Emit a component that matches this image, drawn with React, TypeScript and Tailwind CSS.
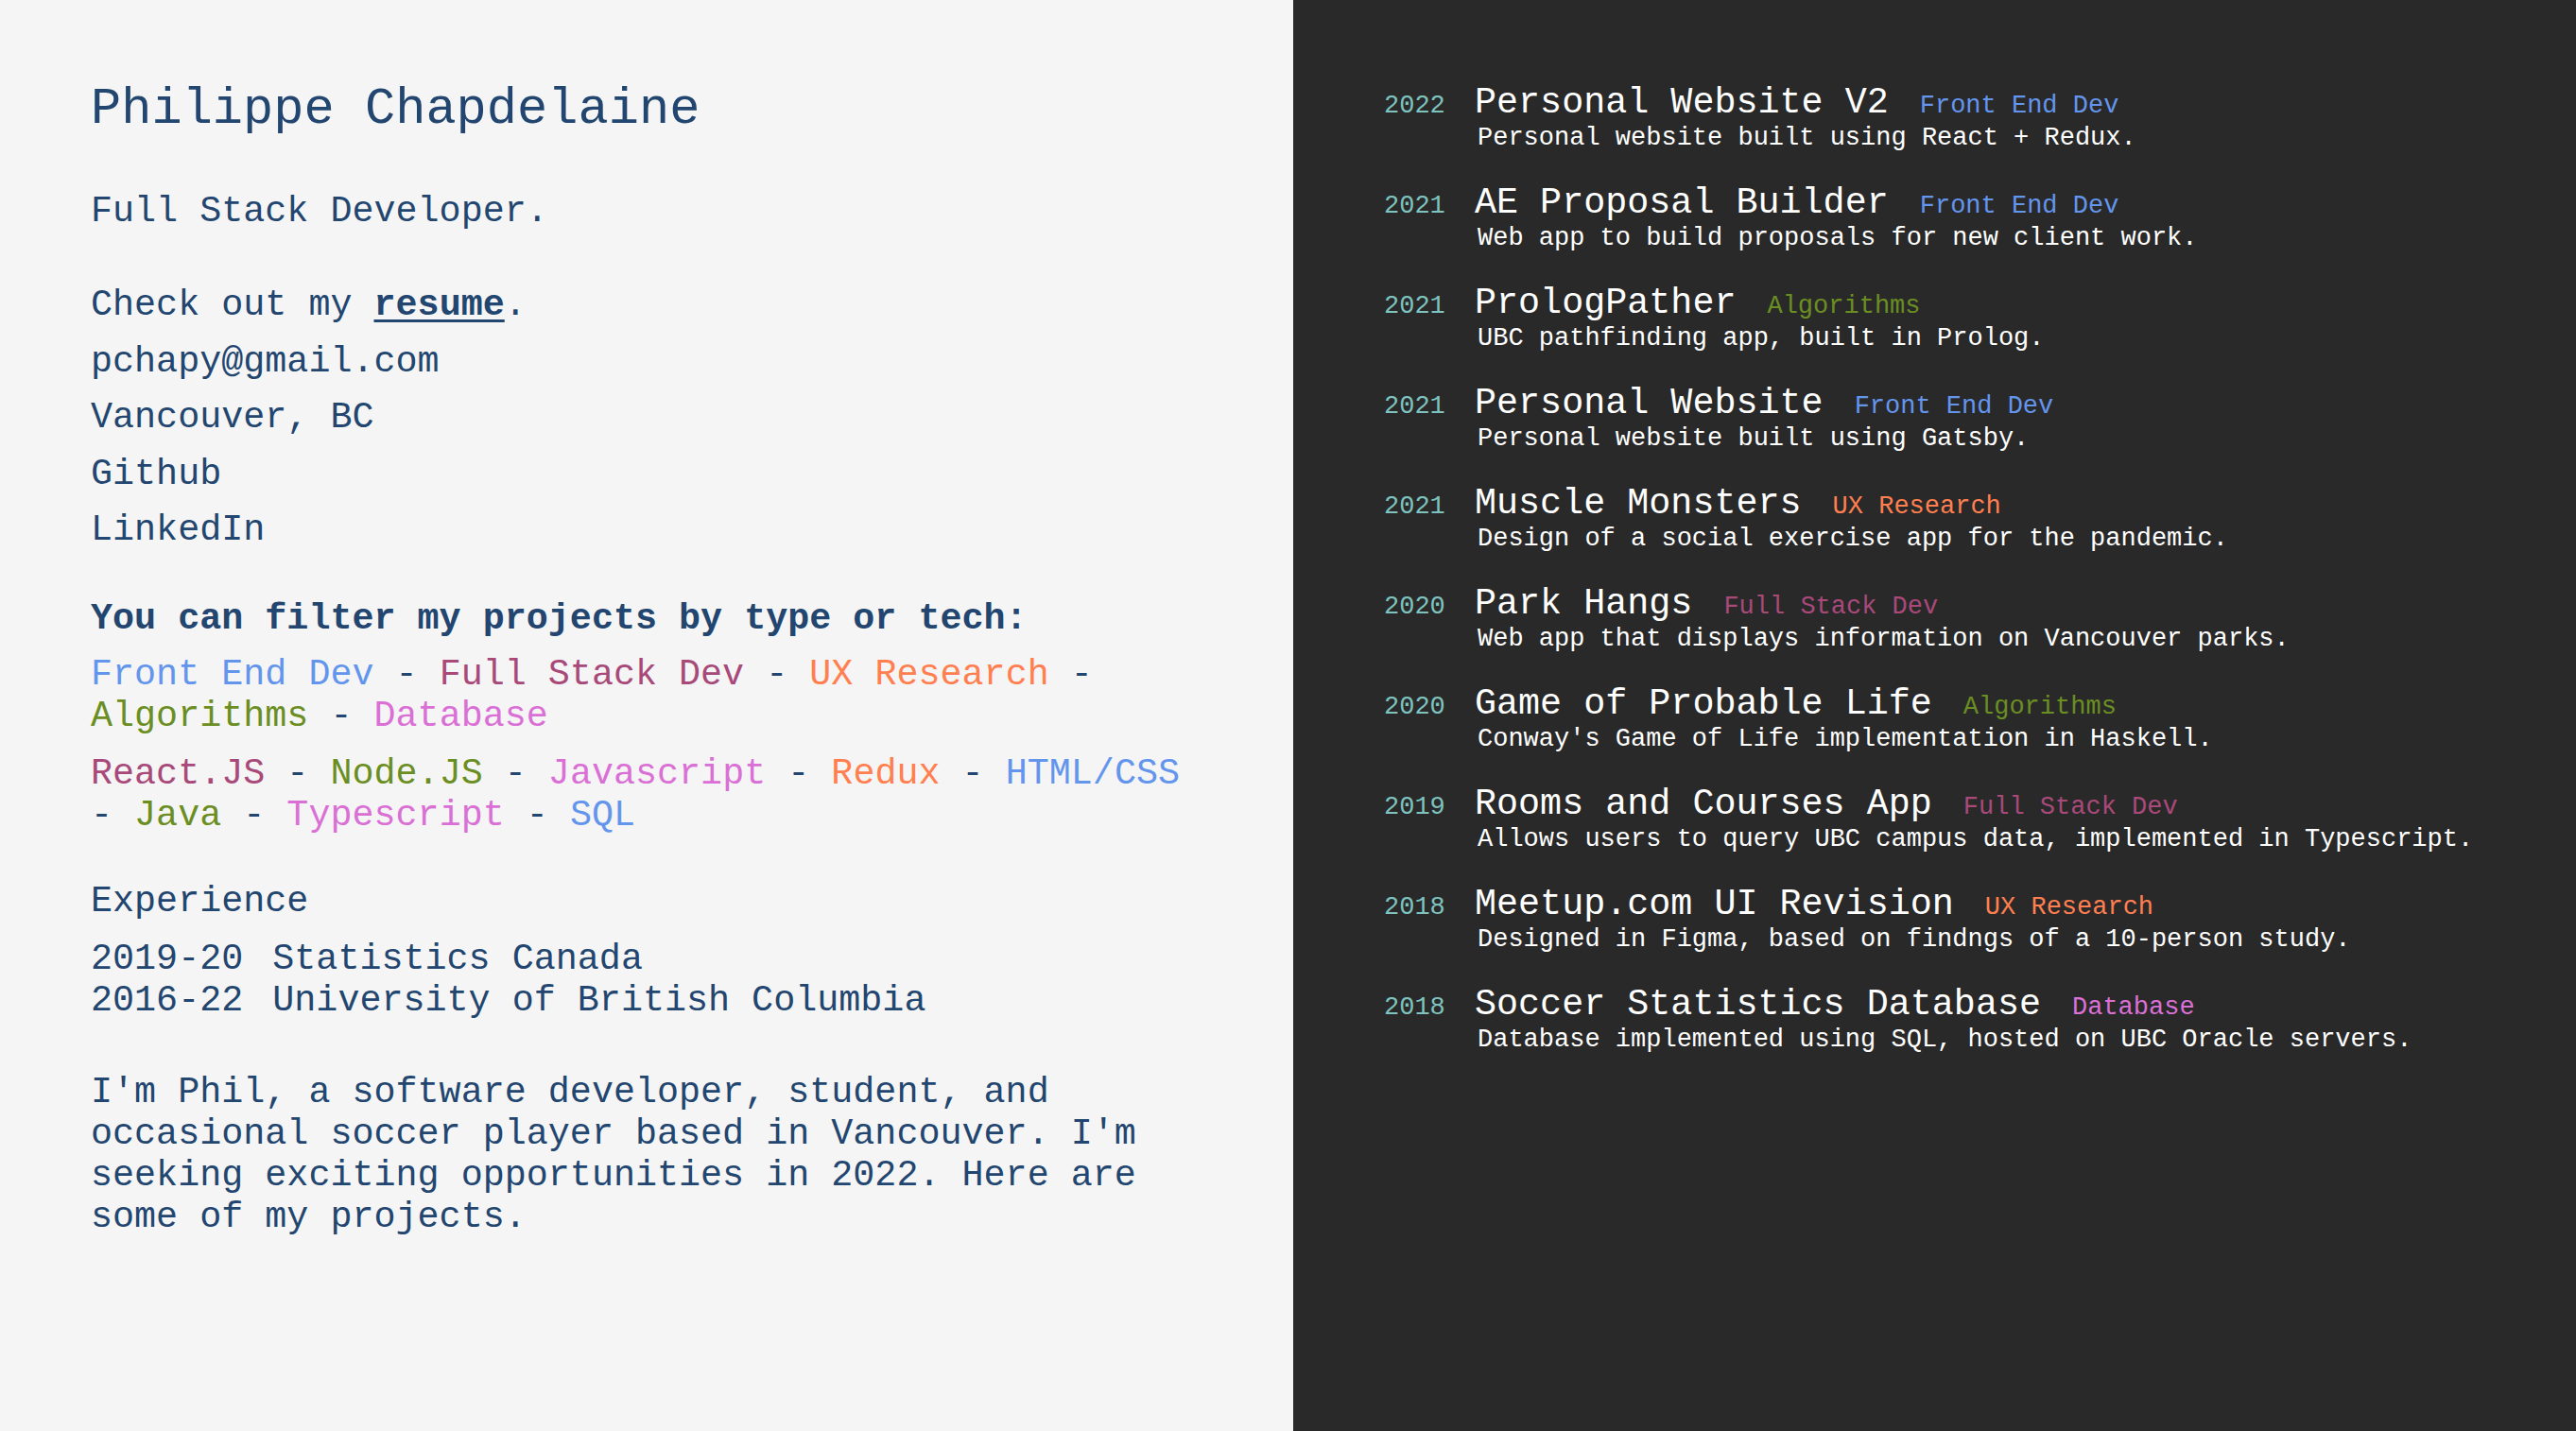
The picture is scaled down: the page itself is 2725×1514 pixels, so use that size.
import React from 'react';

const COLORS: Record<string, string> = {
  'Front End Dev': 'text-[#6495ed]',
  'Full Stack Dev': 'text-[#a8497a]',
  'UX Research': 'text-[#ff7f50]',
  Algorithms: 'text-[#6b8e23]',
  Database: 'text-[#da70d6]',
};

const types = [
  { name: 'Front End Dev', color: 'text-[#6495ed]' },
  { name: 'Full Stack Dev', color: 'text-[#a8497a]' },
  { name: 'UX Research', color: 'text-[#ff7f50]' },
  { name: 'Algorithms', color: 'text-[#6b8e23]' },
  { name: 'Database', color: 'text-[#da70d6]' },
];

const techs = [
  { name: 'React.JS', color: 'text-[#a8497a]' },
  { name: 'Node.JS', color: 'text-[#6b8e23]' },
  { name: 'Javascript', color: 'text-[#da70d6]' },
  { name: 'Redux', color: 'text-[#ff7f50]' },
  { name: 'HTML/CSS', color: 'text-[#6495ed]' },
  { name: 'Java', color: 'text-[#6b8e23]' },
  { name: 'Typescript', color: 'text-[#da70d6]' },
  { name: 'SQL', color: 'text-[#6495ed]' },
];

const projects = [
  { year: '2022', title: 'Personal Website V2', tag: 'Front End Dev', desc: 'Personal website built using React + Redux.' },
  { year: '2021', title: 'AE Proposal Builder', tag: 'Front End Dev', desc: 'Web app to build proposals for new client work.' },
  { year: '2021', title: 'PrologPather', tag: 'Algorithms', desc: 'UBC pathfinding app, built in Prolog.' },
  { year: '2021', title: 'Personal Website', tag: 'Front End Dev', desc: 'Personal website built using Gatsby.' },
  { year: '2021', title: 'Muscle Monsters', tag: 'UX Research', desc: 'Design of a social exercise app for the pandemic.' },
  { year: '2020', title: 'Park Hangs', tag: 'Full Stack Dev', desc: 'Web app that displays information on Vancouver parks.' },
  { year: '2020', title: 'Game of Probable Life', tag: 'Algorithms', desc: "Conway's Game of Life implementation in Haskell." },
  { year: '2019', title: 'Rooms and Courses App', tag: 'Full Stack Dev', desc: 'Allows users to query UBC campus data, implemented in Typescript.' },
  { year: '2018', title: 'Meetup.com UI Revision', tag: 'UX Research', desc: 'Designed in Figma, based on findngs of a 10-person study.' },
  { year: '2018', title: 'Soccer Statistics Database', tag: 'Database', desc: 'Database implemented using SQL, hosted on UBC Oracle servers.' },
];

function FilterLine({ items }: { items: { name: string; color: string }[] }) {
  return (
    <p>
      {items.map((item, i) => (
        <React.Fragment key={item.name}>
          {i > 0 && ' - '}
          <span className={`${item.color} cursor-pointer`}>{item.name}</span>
        </React.Fragment>
      ))}
    </p>
  );
}

export default function App() {
  return (
    <div className="flex min-h-screen font-['Liberation_Mono',monospace]">
      {/* About */}
      <div className="w-[1368px] shrink-0 bg-[#f5f5f5] pt-[85px] px-[96px] text-[#22466f] text-[38.4px] leading-[44px]">
        <h1 className="text-[53.7px] leading-[61px] mb-[56px]">Philippe Chapdelaine</h1>
        <p className="mb-[55px]">Full Stack Developer.</p>

        <div className="flex flex-col gap-[15.5px]">
          <p>
            Check out my{' '}
            <a href="#" className="font-bold underline decoration-[3px] underline-offset-[5px]">
              resume
            </a>
            .
          </p>
          <p>pchapy@gmail.com</p>
          <p>Vancouver, BC</p>
          <p>Github</p>
          <p>LinkedIn</p>
        </div>

        <p className="mt-[50px] mb-[15px] font-bold">You can filter my projects by type or tech:</p>
        <FilterLine items={types} />
        <div className="mt-[17px]">
          <FilterLine items={techs} />
        </div>

        <p className="mt-[47px] mb-[17px]">Experience</p>
        <div className="flex gap-[31px]">
          <div>
            <p>2019-20</p>
            <p>2016-22</p>
          </div>
          <div>
            <p>Statistics Canada</p>
            <p>University of British Columbia</p>
          </div>
        </div>

        <p className="mt-[53px]">
          I'm Phil, a software developer, student, and occasional soccer player based in Vancouver. I'm
          seeking exciting opportunities in 2022. Here are some of my projects.
        </p>
      </div>

      {/* Projects */}
      <div className="flex-1 bg-[#292929] pt-[87px] pl-[96px] pr-8">
        <ul className="flex flex-col gap-[31px]">
          {projects.map((p, i) => (
            <li key={i} className="flex items-baseline gap-[31px]">
              <span className="w-[65px] shrink-0 text-[27px] leading-none text-[#7ec3bf]">{p.year}</span>
              <div>
                <div className="text-[38.4px] leading-[44px] text-white">
                  {p.title}
                  <span className={`ml-[33px] text-[27px] leading-none ${COLORS[p.tag]}`}>{p.tag}</span>
                </div>
                <p className="pl-[3px] text-[27px] leading-[31px] text-white">{p.desc}</p>
              </div>
            </li>
          ))}
        </ul>
      </div>
    </div>
  );
}
